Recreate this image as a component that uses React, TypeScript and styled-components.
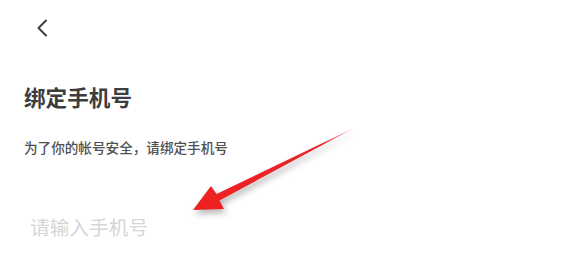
import React from 'react'
import styled, { createGlobalStyle } from 'styled-components'

const GlobalStyle = createGlobalStyle`
	html, body {
		margin: 0;
		padding: 0;
		background: #fff;
		font-family: "Noto Sans CJK SC", "Noto Sans", sans-serif;
	}
`

const Page = styled.div`
	position: relative;
	width: 573px;
	height: 268px;
	overflow: hidden;
	background: #fff;
	display: flex;
	flex-direction: column;
	padding: 16px 0 0 24px;
	box-sizing: border-box;
`

const BackButton = styled.button`
	width: 24px;
	height: 24px;
	margin-left: 6px;
	padding: 0;
	border: 0;
	background: none;
	display: flex;
	align-items: center;
	justify-content: center;
	color: #3c3c3c;
`

const Title = styled.h1`
	margin: 42px 0 0;
	font-size: 21.6px;
	line-height: 30px;
	font-weight: 700;
	color: #3d3d3d;
	letter-spacing: 0;
`

const Hint = styled.p`
	margin: 26px 0 0;
	font-size: 13.6px;
	line-height: 18px;
	font-weight: 500;
	color: #505050;
`

const PhoneInput = styled.input`
	margin: 57px 0 0 6px;
	width: 300px;
	padding: 0;
	border: 0;
	outline: none;
	background: transparent;
	font-family: inherit;
	font-size: 19.7px;
	line-height: 28px;
	color: #333;
	&::placeholder {
		color: #d6d6d6;
	}
`

const Arrow = styled.svg`
	position: absolute;
	left: 0;
	top: 0;
	width: 573px;
	height: 268px;
	pointer-events: none;
	filter: drop-shadow(2px 4px 3px rgba(0, 0, 0, 0.28));
`

export default function App() {
	return (
		<>
			<GlobalStyle />
			<Page>
				{/* Back */}
				<BackButton aria-label="返回">
					<svg width="12" height="18" viewBox="0 0 12 18" fill="none">
						<path d="M10 1.5 L2.5 9 L10 16.5" stroke="currentColor" strokeWidth="2" strokeLinecap="round" strokeLinejoin="round" />
					</svg>
				</BackButton>

				<Title>绑定手机号</Title>
				<Hint>为了你的帐号安全，请绑定手机号</Hint>
				<PhoneInput type="tel" placeholder="请输入手机号" />

				{/* Annotation arrow */}
				<Arrow viewBox="0 0 573 268">
					<defs>
						<linearGradient id="shaft" x1="193" y1="210" x2="354" y2="128" gradientUnits="userSpaceOnUse">
							<stop offset="0" stopColor="#f02020" />
							<stop offset="0.8" stopColor="#e8242c" />
							<stop offset="1" stopColor="#f4a0a6" />
						</linearGradient>
					</defs>
					<polygon
						points="193,210 211,186 216.5,194 354,128 219.5,200.5 224,209"
						fill="url(#shaft)"
					/>
				</Arrow>
			</Page>
		</>
	)
}
